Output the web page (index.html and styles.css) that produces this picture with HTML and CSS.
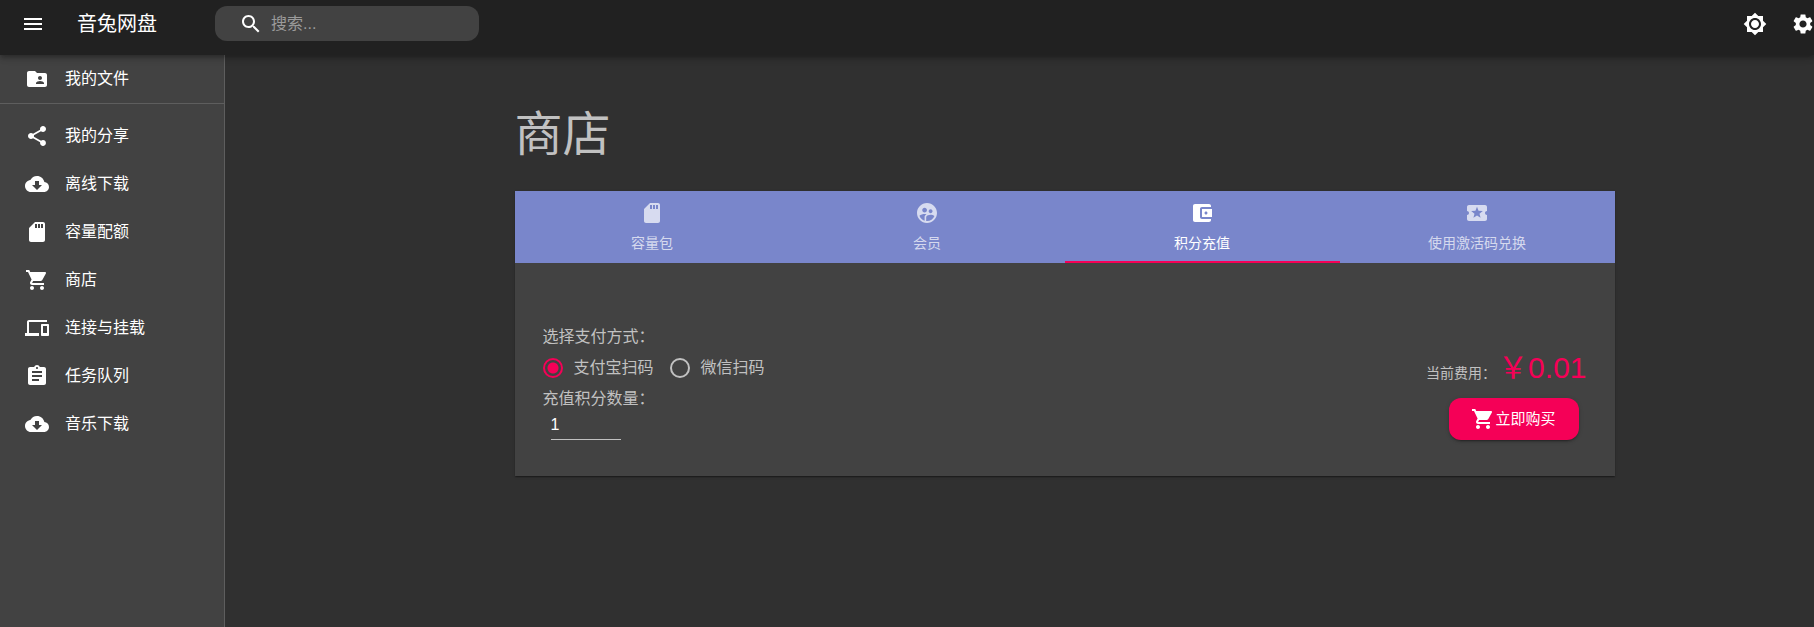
FILE: index.html
```html
<!DOCTYPE html>
<html lang="zh-CN">
<head>
<meta charset="utf-8">
<title>商店 - 音兔网盘</title>
<link rel="stylesheet" href="styles.css">
</head>
<body>
<svg class="sprite" aria-hidden="true">
  <symbol id="i-cloud" viewBox="0 0 24 24"><path d="M19.35 10.04C18.67 6.59 15.64 4 12 4 9.11 4 6.6 5.64 5.35 8.04 2.34 8.36 0 10.91 0 14c0 3.31 2.69 6 6 6h13c2.76 0 5-2.24 5-5 0-2.64-2.05-4.78-4.65-4.96zM17 13l-5 5-5-5h3V9h4v4h3z"/></symbol>
  <symbol id="i-sd" viewBox="0 0 24 24"><path d="M18 2h-8L4.02 8 4 20c0 1.1.9 2 2 2h12c1.1 0 2-.9 2-2V4c0-1.1-.9-2-2-2zm-6 6h-2V4h2v4zm3 0h-2V4h2v4zm3 0h-2V4h2v4z"/></symbol>
  <symbol id="i-cart" viewBox="0 0 24 24"><path d="M7 18c-1.1 0-1.99.9-1.99 2S5.9 22 7 22s2-.9 2-2-.9-2-2-2zM1 2v2h2l3.6 7.59-1.35 2.45c-.16.28-.25.61-.25.96 0 1.1.9 2 2 2h12v-2H7.42c-.14 0-.25-.11-.25-.25l.03-.12.9-1.63h7.45c.75 0 1.41-.41 1.75-1.03l3.58-6.49c.08-.14.12-.31.12-.48 0-.55-.45-1-1-1H5.21l-.94-2H1zm16 16c-1.1 0-1.99.9-1.99 2s.89 2 1.99 2 2-.9 2-2-.9-2-2-2z"/></symbol>
</svg>
<header class="bar">
  <button class="icon-button" aria-label="菜单"><svg class="icon" viewBox="0 0 24 24"><path d="M3 18h18v-2H3v2zm0-5h18v-2H3v2zm0-7v2h18V6H3z"/></svg></button>
  <span class="brand">音兔网盘</span>
  <label class="search">
    <svg class="icon" viewBox="0 0 24 24"><path d="M15.5 14h-.79l-.28-.27C15.41 12.59 16 11.11 16 9.5 16 5.91 13.09 3 9.5 3S3 5.91 3 9.5 5.91 16 9.5 16c1.61 0 3.09-.59 4.23-1.57l.27.28v.79l5 4.99L20.49 19l-4.99-5zm-6 0C7.01 14 5 11.99 5 9.5S7.01 5 9.5 5 14 7.01 14 9.5 11.99 14 9.5 14z"/></svg>
    <input class="search-input" type="text" placeholder="搜索..." aria-label="搜索">
  </label>
  <div class="bar-actions">
    <button class="icon-button" aria-label="切换主题"><svg class="icon" viewBox="0 0 24 24"><path d="M20 8.69V4h-4.69L12 .69 8.69 4H4v4.69L.69 12 4 15.31V20h4.69L12 23.31 15.31 20H20v-4.69L23.31 12 20 8.69zM12 18c-3.31 0-6-2.69-6-6s2.69-6 6-6 6 2.69 6 6-2.69 6-6 6zm0-10c-2.21 0-4 1.79-4 4s1.79 4 4 4 4-1.79 4-4-1.79-4-4-4z"/></svg></button>
    <button class="icon-button" aria-label="设置"><svg class="icon" viewBox="0 0 24 24"><path d="M19.14 12.94c.04-.3.06-.61.06-.94 0-.32-.02-.64-.07-.94l2.03-1.58c.18-.14.23-.41.12-.61l-1.92-3.32c-.12-.22-.37-.29-.59-.22l-2.39.96c-.5-.38-1.03-.7-1.62-.94l-.36-2.54c-.04-.24-.24-.41-.48-.41h-3.84c-.24 0-.43.17-.47.41l-.36 2.54c-.59.24-1.13.57-1.62.94l-2.39-.96c-.22-.08-.47 0-.59.22L2.74 8.87c-.12.21-.08.47.12.61l2.03 1.58c-.05.3-.09.63-.09.94s.02.64.07.94l-2.03 1.58c-.18.14-.23.41-.12.61l1.92 3.32c.12.22.37.29.59.22l2.39-.96c.5.38 1.03.7 1.62.94l.36 2.54c.05.24.24.41.48.41h3.84c.24 0 .44-.17.47-.41l.36-2.54c.59-.24 1.13-.56 1.62-.94l2.39.96c.22.08.47 0 .59-.22l1.92-3.32c.12-.22.07-.47-.12-.61l-2.01-1.58zM12 15.6c-1.98 0-3.6-1.62-3.6-3.6s1.62-3.6 3.6-3.6 3.6 1.62 3.6 3.6-1.62 3.6-3.6 3.6z"/></svg></button>
  </div>
</header>
<div class="body">
  <nav class="side">
    <a class="side-item" href="#files"><svg class="icon" viewBox="0 0 24 24"><path d="M20 6h-8l-2-2H4c-1.1 0-1.99.9-1.99 2L2 18c0 1.1.9 2 2 2h16c1.1 0 2-.9 2-2V8c0-1.1-.9-2-2-2zm-5 3c1.1 0 2 .9 2 2s-.9 2-2 2-2-.9-2-2 .9-2 2-2zm4 8h-8v-1c0-1.33 2.67-2 4-2s4 .67 4 2v1z"/></svg>我的文件</a>
    <div class="side-group">
      <a class="side-item" href="#shares"><svg class="icon" viewBox="0 0 24 24"><path d="M18 16.08c-.76 0-1.44.3-1.96.77L8.91 12.7c.05-.23.09-.46.09-.7s-.04-.47-.09-.7l7.05-4.11c.54.5 1.25.81 2.04.81 1.66 0 3-1.34 3-3s-1.34-3-3-3-3 1.34-3 3c0 .24.04.47.09.7L8.04 9.81C7.5 9.31 6.79 9 6 9c-1.66 0-3 1.34-3 3s1.34 3 3 3c.79 0 1.5-.31 2.04-.81l7.12 4.16c-.05.21-.08.43-.08.65 0 1.61 1.31 2.92 2.92 2.92 1.61 0 2.92-1.31 2.92-2.92s-1.31-2.92-2.92-2.92z"/></svg>我的分享</a>
      <a class="side-item" href="#offline"><svg class="icon"><use href="#i-cloud"/></svg>离线下载</a>
      <a class="side-item" href="#quota"><svg class="icon"><use href="#i-sd"/></svg>容量配额</a>
      <a class="side-item" href="#shop"><svg class="icon"><use href="#i-cart"/></svg>商店</a>
      <a class="side-item" href="#connect"><svg class="icon" viewBox="0 0 24 24"><path d="M4 6h18V4H4c-1.1 0-2 .9-2 2v11H0v3h14v-3H4V6zm19 2h-6c-.55 0-1 .45-1 1v10c0 .55.45 1 1 1h6c.55 0 1-.45 1-1V9c0-.55-.45-1-1-1zm-1 9h-4v-7h4v7z"/></svg>连接与挂载</a>
      <a class="side-item" href="#tasks"><svg class="icon" viewBox="0 0 24 24"><path d="M19 3h-4.18C14.4 1.84 13.3 1 12 1c-1.3 0-2.4.84-2.82 2H5c-1.1 0-2 .9-2 2v14c0 1.1.9 2 2 2h14c1.1 0 2-.9 2-2V5c0-1.1-.9-2-2-2zm-7 0c.55 0 1 .45 1 1s-.45 1-1 1-1-.45-1-1 .45-1 1-1zm2 14H7v-2h7v2zm3-4H7v-2h10v2zm0-4H7V7h10v2z"/></svg>任务队列</a>
      <a class="side-item" href="#music"><svg class="icon"><use href="#i-cloud"/></svg>音乐下载</a>
    </div>
  </nav>
  <main class="main">
    <div class="container">
      <h1 class="title">商店</h1>
      <section class="card">
        <div class="tabs" role="tablist">
          <button class="tab" role="tab"><svg class="icon"><use href="#i-sd"/></svg>容量包</button>
          <button class="tab" role="tab"><svg class="icon" viewBox="0 0 24 24"><path d="M11.99 2c-5.52 0-10 4.48-10 10s4.48 10 10 10 10-4.48 10-10-4.48-10-10-10zm3.61 6.34c1.07 0 1.93.86 1.93 1.93 0 1.07-.86 1.93-1.93 1.93-1.07 0-1.93-.86-1.93-1.93-.01-1.07.86-1.93 1.93-1.93zm-6-1.58c1.3 0 2.36 1.06 2.36 2.36 0 1.3-1.06 2.36-2.36 2.36s-2.36-1.06-2.36-2.36c0-1.31 1.05-2.36 2.36-2.36zm0 9.13v3.75c-2.4-.75-4.3-2.6-5.14-4.96 1.05-1.12 3.67-1.69 5.14-1.69.53 0 1.2.08 1.9.22-1.64.87-1.9 2.02-1.9 2.68zM11.99 20c-.27 0-.53-.01-.79-.04v-4.07c0-1.42 2.94-2.13 4.4-2.13 1.07 0 2.92.39 3.84 1.15-1.17 2.97-4.06 5.09-7.45 5.09z"/></svg>会员</button>
          <button class="tab tab-active" role="tab" aria-selected="true"><svg class="icon" viewBox="0 0 24 24"><path d="M21 18v1c0 1.1-.9 2-2 2H5c-1.11 0-2-.9-2-2V5c0-1.1.89-2 2-2h14c1.1 0 2 .9 2 2v1h-9c-1.11 0-2 .9-2 2v8c0 1.1.89 2 2 2h9zm-9-2h10V8H12v8zm4-2.5c-.83 0-1.5-.67-1.5-1.5s.67-1.5 1.5-1.5 1.5.67 1.5 1.5-.67 1.5-1.5 1.5z"/></svg>积分充值</button>
          <button class="tab" role="tab"><svg class="icon" viewBox="0 0 24 24"><path d="M20 12c0-1.1.9-2 2-2V6c0-1.1-.9-2-2-2H4c-1.1 0-1.99.9-1.99 2v4c1.1 0 1.99.9 1.99 2s-.89 2-2 2v4c0 1.1.9 2 2 2h16c1.1 0 2-.9 2-2v-4c-1.1 0-2-.9-2-2zm-4.42 4.8L12 14.5l-3.58 2.3 1.08-4.12-3.29-2.69 4.24-.25L12 5.8l1.54 3.95 4.24.25-3.29 2.69 1.09 4.11z"/></svg>使用激活码兑换</button>
        </div>
        <form class="panel">
          <div class="fields">
            <div class="field-label">选择支付方式：</div>
            <div class="radios">
              <label class="radio-label"><input class="radio" type="radio" name="pay" checked>支付宝扫码</label>
              <label class="radio-label"><input class="radio" type="radio" name="pay">微信扫码</label>
            </div>
            <label class="field-label" for="amount">充值积分数量：</label>
            <input class="amount" id="amount" type="text" inputmode="numeric" value="1">
          </div>
          <div class="checkout">
            <div class="fee">当前费用：<span class="price">￥0.01</span></div>
            <button class="buy" type="button"><svg class="icon"><use href="#i-cart"/></svg>立即购买</button>
          </div>
        </form>
      </section>
    </div>
  </main>
</div>
</body>
</html>
```
FILE: styles.css
```css
* {
  box-sizing: border-box;
}

body {
  margin: 0;
  min-height: 100vh;
  display: flex;
  flex-direction: column;
  background: #303030;
  color: #fff;
  font: 16px/24px "Liberation Sans", "Noto Sans CJK SC", sans-serif;
}

button,
input {
  font: inherit;
  color: inherit;
}

button {
  border: 0;
  padding: 0;
  background: none;
  cursor: pointer;
}

.sprite {
  display: none;
}

.icon {
  display: block;
  flex: none;
  width: 24px;
  height: 24px;
  fill: currentColor;
}

.bar {
  position: relative;
  z-index: 1;
  display: flex;
  align-items: center;
  padding: 6px 0 14px 21px;
  background: #212121;
  box-shadow: 0 2px 4px -1px rgba(0, 0, 0, .2), 0 4px 5px rgba(0, 0, 0, .14), 0 1px 10px rgba(0, 0, 0, .12);
}

.brand {
  margin-left: 32px;
  font-size: 20px;
}

.search {
  display: flex;
  align-items: center;
  gap: 8px;
  width: 264px;
  height: 35px;
  margin-left: 58px;
  padding-left: 24px;
  border-radius: 12px;
  background: #424242;
}

.search-input {
  min-width: 0;
  flex: 1;
  padding: 0;
  border: 0;
  outline: 0;
  background: none;
}

.search-input::placeholder {
  color: #9b9b9b;
  opacity: 1;
}

.bar-actions {
  display: flex;
  gap: 24px;
  margin-left: auto;
}

.bar-actions .icon-button:last-child {
  margin-right: -1px;
}

.body {
  flex: 1;
  display: flex;
}

.side {
  flex: none;
  width: 225px;
  border-right: 1px solid #5e5e5e;
  background: #424242;
}

.side-group {
  padding: 8px 0;
  border-top: 1px solid #5e5e5e;
}

.side-item {
  display: flex;
  align-items: center;
  gap: 16px;
  height: 48px;
  padding-left: 25px;
  color: inherit;
  text-decoration: none;
}

.main {
  flex: 1;
  min-width: 0;
  padding: 52px 24px 32px 114px;
}

.container {
  max-width: 1100px;
  margin: 0 auto;
}

.title {
  margin: 0 0 28px;
  color: #c1c1c1;
  font-size: 48px;
  font-weight: 400;
  line-height: 56px;
}

.card {
  background: #424242;
  box-shadow: 0 2px 1px -1px rgba(0, 0, 0, .2), 0 1px 1px rgba(0, 0, 0, .14), 0 1px 3px rgba(0, 0, 0, .12);
}

.tabs {
  display: grid;
  grid-template-columns: repeat(4, 1fr);
  background: #7986cb;
}

.tab {
  display: flex;
  flex-direction: column;
  align-items: center;
  gap: 6px;
  height: 72px;
  padding-top: 10px;
  border-bottom: 2px solid transparent;
  color: rgba(255, 255, 255, .7);
  font-size: 14px;
}

.tab-active {
  border-color: #f50057;
  color: #fff;
}

.panel {
  display: flex;
  justify-content: space-between;
  padding: 62px 28px 36px;
  color: #c1c1c1;
}

.fields {
  display: flex;
  flex-direction: column;
  gap: 7px;
}

.radios {
  display: flex;
  gap: 16px;
}

.radio-label {
  display: flex;
  align-items: center;
  gap: 11px;
}

.radio {
  appearance: none;
  width: 20px;
  height: 20px;
  margin: 0;
  border: 2px solid #c1c1c1;
  border-radius: 50%;
}

.radio:checked {
  border-color: #f50057;
  background: radial-gradient(circle, #f50057 5px, transparent 6px);
}

.amount {
  width: 70px;
  height: 29px;
  margin: -7px 0 0 8px;
  padding: 0;
  border: 0;
  border-bottom: 1px solid #c1c1c1;
  outline: 0;
  background: none;
  color: #fff;
}

.checkout {
  display: flex;
  flex-direction: column;
  align-items: flex-end;
  justify-content: flex-end;
  gap: 5px;
}

.fee {
  font-size: 14px;
  line-height: 40px;
}

.price {
  margin-left: 2px;
  color: #f50057;
  font-size: 30px;
}

.buy {
  display: flex;
  align-items: center;
  justify-content: center;
  width: 130px;
  height: 42px;
  margin-right: 8px;
  border-radius: 12px;
  background: #f50057;
  color: #fff;
  font-size: 15px;
  box-shadow: 0 3px 1px -2px rgba(0, 0, 0, .2), 0 2px 2px rgba(0, 0, 0, .14), 0 1px 5px rgba(0, 0, 0, .12);
}
```
